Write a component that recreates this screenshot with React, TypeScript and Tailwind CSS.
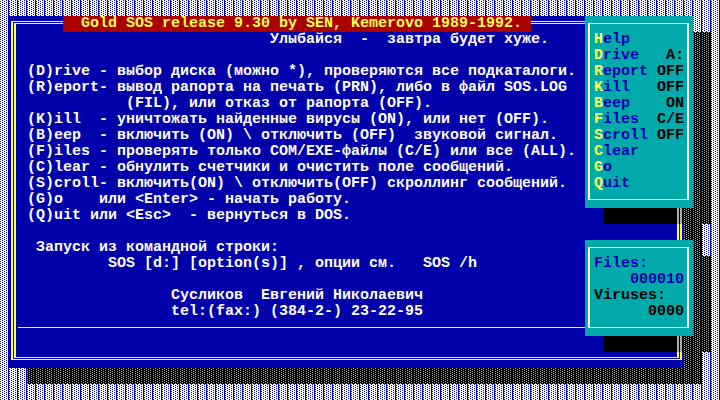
import React from 'react'

// ▓ dither in 9x2 tiles: four dots + the 9th column
const DITHER_MAIN =
  'bg-white [background-image:conic-gradient(from_270deg_at_1px_1px,#0000aa_25%,transparent_0),conic-gradient(from_270deg_at_1px_1px,#0000aa_25%,transparent_0),conic-gradient(from_270deg_at_1px_1px,#0000aa_25%,transparent_0),conic-gradient(from_270deg_at_1px_1px,#0000aa_25%,transparent_0),linear-gradient(90deg,transparent_8px,#0000aa_8px)] [background-size:9px_2px] [background-position:2px_0,6px_0,0_1px,4px_1px,0_0]'

// same dither in shadow: gray dots on black
const DITHER_SHADOW =
  'bg-black [background-image:conic-gradient(from_270deg_at_1px_1px,#aaaaaa_25%,transparent_0),conic-gradient(from_270deg_at_1px_1px,#aaaaaa_25%,transparent_0),conic-gradient(from_270deg_at_1px_1px,#aaaaaa_25%,transparent_0),conic-gradient(from_270deg_at_1px_1px,#aaaaaa_25%,transparent_0)] [background-size:9px_2px] [background-position:2px_0,6px_0,0_1px,4px_1px]'

const helpText = [
  '                           Улыбайся  -  завтра будет хуже.',
  '',
  '(D)rive - выбор диска (можно *), проверяются все подкаталоги.',
  '(R)eport- вывод рапорта на печать (PRN), либо в файл SOS.LOG',
  '           (FIL), или отказ от рапорта (OFF).',
  '(K)ill  - уничтожать найденные вирусы (ON), или нет (OFF).',
  '(B)eep  - включить (ON) \\ отключить (OFF)  звуковой сигнал.',
  '(F)iles - проверять только COM/EXE-файлы (C/E) или все (ALL).',
  '(C)lear - обнулить счетчики и очистить поле сообщений.',
  '(S)croll- включить(ON) \\ отключить(OFF) скроллинг сообщений.',
  '(G)o    или <Enter> - начать работу.',
  '(Q)uit или <Esc>  - вернуться в DOS.',
  '',
  ' Запуск из командной строки:',
  '         SOS [d:] [option(s)] , опции см.   SOS /h',
  '',
  '                Сусликов  Евгений Николаевич',
  '                tel:(fax:) (384-2-) 23-22-95',
]

const menu = [
  { key: 'H', rest: 'elp', value: '' },
  { key: 'D', rest: 'rive', value: 'A:' },
  { key: 'R', rest: 'eport', value: 'OFF' },
  { key: 'K', rest: 'ill', value: 'OFF' },
  { key: 'B', rest: 'eep', value: 'ON' },
  { key: 'F', rest: 'iles', value: 'C/E' },
  { key: 'S', rest: 'croll', value: 'OFF' },
  { key: 'C', rest: 'lear', value: '' },
  { key: 'G', rest: 'o', value: '' },
  { key: 'Q', rest: 'uit', value: '' },
]

const ShadowPatch = ({ row }: { row: string }) => (
  <div className={`relative col-start-68 col-span-9 ${row} bg-black flex justify-end`}>
    <div className="w-[9px] flex pl-[2px] gap-px">
      <div className="w-[2px] bg-[#aaaaaa]" />
      <div className="w-[2px] bg-[#aaaaaa]" />
    </div>
  </div>
)

const Panel = ({ pos, children }: { pos: string; children: React.ReactNode }) => (
  <div className={`relative ${pos} bg-[#00aaaa] flex pt-[7px] pb-[8px] pl-[3px] pr-[4px]`}>
    <div className="flex-1 border-y border-x-2 border-white pt-[8px] pl-[4px] pr-[3px]">
      {children}
    </div>
  </div>
)

export default function App() {
  return (
    <div
      className={`grid grid-cols-[repeat(80,9px)] grid-rows-[repeat(25,16px)] w-[720px] h-[400px] overflow-hidden font-['Liberation_Mono',monospace] font-bold text-[15px] leading-4 ${DITHER_MAIN}`}
    >
      {/* shadows on the desktop */}
      <div className={`col-start-4 col-span-75 row-start-3 row-span-22 ${DITHER_SHADOW}`} />
      <div className={`col-start-68 col-span-12 row-start-3 row-span-12 ${DITHER_SHADOW}`} />
      <div className={`col-start-68 col-span-12 row-start-17 row-span-6 ${DITHER_SHADOW}`} />

      {/* main help window */}
      <div className="col-start-2 col-span-75 row-start-2 row-span-22 relative bg-[#0000aa] flex pt-[5px] px-[2px] pb-[8px]">
        <div className="flex-1 flex border-y border-x-2 border-[#ffff55] p-px">
          <div className="flex-1 flex flex-col border-y border-x-2 border-[#ffff55] pt-[8px] pl-[11px] text-white">
            {helpText.map((line, i) => (
              <div key={i} className="h-4 whitespace-pre">
                {line}
              </div>
            ))}
            <div className="h-4 -ml-[9px] mr-[2px] pt-[7px]">
              <div className="border-t border-[#ffff55]" />
            </div>
          </div>
        </div>
        <div className="absolute left-[54px] top-0 h-4 w-[468px] bg-[#aa0000] text-[#ffff55] whitespace-pre">
          {'  Gold SOS release 9.30 by SEN, Kemerovo 1989-1992. '}
        </div>
      </div>

      {/* panel shadows falling on the window */}
      <ShadowPatch row="row-start-14" />
      <ShadowPatch row="row-start-22" />

      {/* command menu */}
      <Panel pos="col-start-66 col-span-12 row-start-2 row-span-12">
        {menu.map((m) => (
          <div key={m.key} className="h-4 flex justify-between whitespace-pre">
            <span>
              <span className="text-[#ffff55]">{m.key}</span>
              <span className="text-[#0000aa]">{m.rest}</span>
            </span>
            <span className="text-black">{m.value}</span>
          </div>
        ))}
      </Panel>

      {/* counters */}
      <Panel pos="col-start-66 col-span-12 row-start-16 row-span-6">
        <div className="h-4 text-[#0000aa]">Files:</div>
        <div className="h-4 text-right text-[#0000aa]">000010</div>
        <div className="h-4 text-black">Viruses:</div>
        <div className="h-4 text-right text-black">0000</div>
      </Panel>
    </div>
  )
}
